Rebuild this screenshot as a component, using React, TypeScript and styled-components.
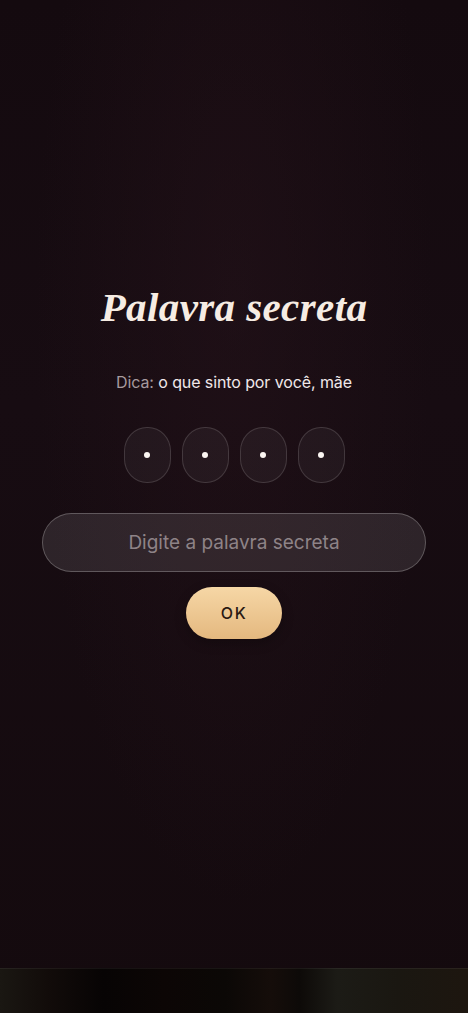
import React from 'react'
import styled, {createGlobalStyle} from 'styled-components'

const GlobalStyle = createGlobalStyle`
  html, body {
    margin: 0;
    padding: 0;
    background: #130a0e;
  }
  * { box-sizing: border-box; }
`

const Page = styled.div`
  width: 100%;
  height: 1013px;
  display: flex;
  flex-direction: column;
  overflow: hidden;
  background:
    radial-gradient(ellipse at 50% 30%, rgba(40, 20, 28, 0.45) 0%, rgba(0, 0, 0, 0) 60%),
    linear-gradient(180deg, #140a0f 0%, #170c12 40%, #140a0e 100%);
`

const Main = styled.main`
  flex: 1;
  display: flex;
  flex-direction: column;
  align-items: center;
  padding-top: 280px;
`

const Title = styled.h1`
  margin: 0;
  font-family: "Liberation Serif", "DejaVu Serif", serif;
  font-style: italic;
  font-weight: 700;
  font-size: 41px;
  line-height: 54px;
  color: #f6ece3;
  letter-spacing: 0.4px;
`

const Hint = styled.p`
  margin: 37px 0 0;
  font-family: Inter, "Noto Sans", sans-serif;
  font-size: 16px;
  line-height: 22px;
  color: #f0e8ea;
  letter-spacing: -0.1px;

  span {
    color: #a69a9e;
  }
`

const PinRow = styled.div`
  display: flex;
  gap: 11px;
  margin-top: 34px;
`

const PinBox = styled.div`
  width: 47px;
  height: 56px;
  border-radius: 23px / 24px;
  border: 1px solid rgba(255, 255, 255, 0.14);
  background: rgba(255, 255, 255, 0.045);
  display: flex;
  align-items: center;
  justify-content: center;
`

const Dot = styled.span`
  width: 6px;
  height: 6px;
  border-radius: 50%;
  background: #fbf6f2;
`

const SecretInput = styled.input`
  margin-top: 30px;
  width: 384px;
  height: 59px;
  border-radius: 30px;
  border: 1px solid rgba(255, 255, 255, 0.24);
  background: rgba(255, 255, 255, 0.1);
  text-align: center;
  font-family: Inter, "Noto Sans", sans-serif;
  font-size: 19px;
  color: #f0e8ea;
  outline: none;

  &::placeholder {
    color: #8e8387;
  }
`

const OkButton = styled.button`
  margin-top: 15px;
  width: 96px;
  height: 52px;
  border: none;
  border-radius: 26px;
  background: linear-gradient(180deg, #f6d7a6 0%, #e4b87f 100%);
  box-shadow: 0 4px 12px rgba(0, 0, 0, 0.25);
  font-family: Inter, "Noto Sans", sans-serif;
  font-size: 16px;
  font-weight: 500;
  letter-spacing: 1.6px;
  color: #2a1913;
  cursor: pointer;
`

const BottomStrip = styled.div`
  height: 45px;
  border-top: 1px solid rgba(255, 255, 255, 0.06);
  background: linear-gradient(
    90deg,
    #1a1712 0%,
    #120c0a 10%,
    #070404 22%,
    #0c0605 35%,
    #0b0806 48%,
    #150d0a 58%,
    #0d0a08 64%,
    #1c1b16 72%,
    #1a1711 85%,
    #1d160f 100%
  );
`

const pins = [0, 1, 2, 3]

export default function App() {
  return (
    <>
      <GlobalStyle />
      <Page>
        <Main>
          <Title>Palavra secreta</Title>
          <Hint>
            <span>Dica:</span> o que sinto por você, mãe
          </Hint>
          <PinRow>
            {pins.map(i => (
              <PinBox key={i}>
                <Dot />
              </PinBox>
            ))}
          </PinRow>
          <SecretInput placeholder="Digite a palavra secreta" />
          <OkButton>OK</OkButton>
        </Main>
        <BottomStrip />
      </Page>
    </>
  )
}
